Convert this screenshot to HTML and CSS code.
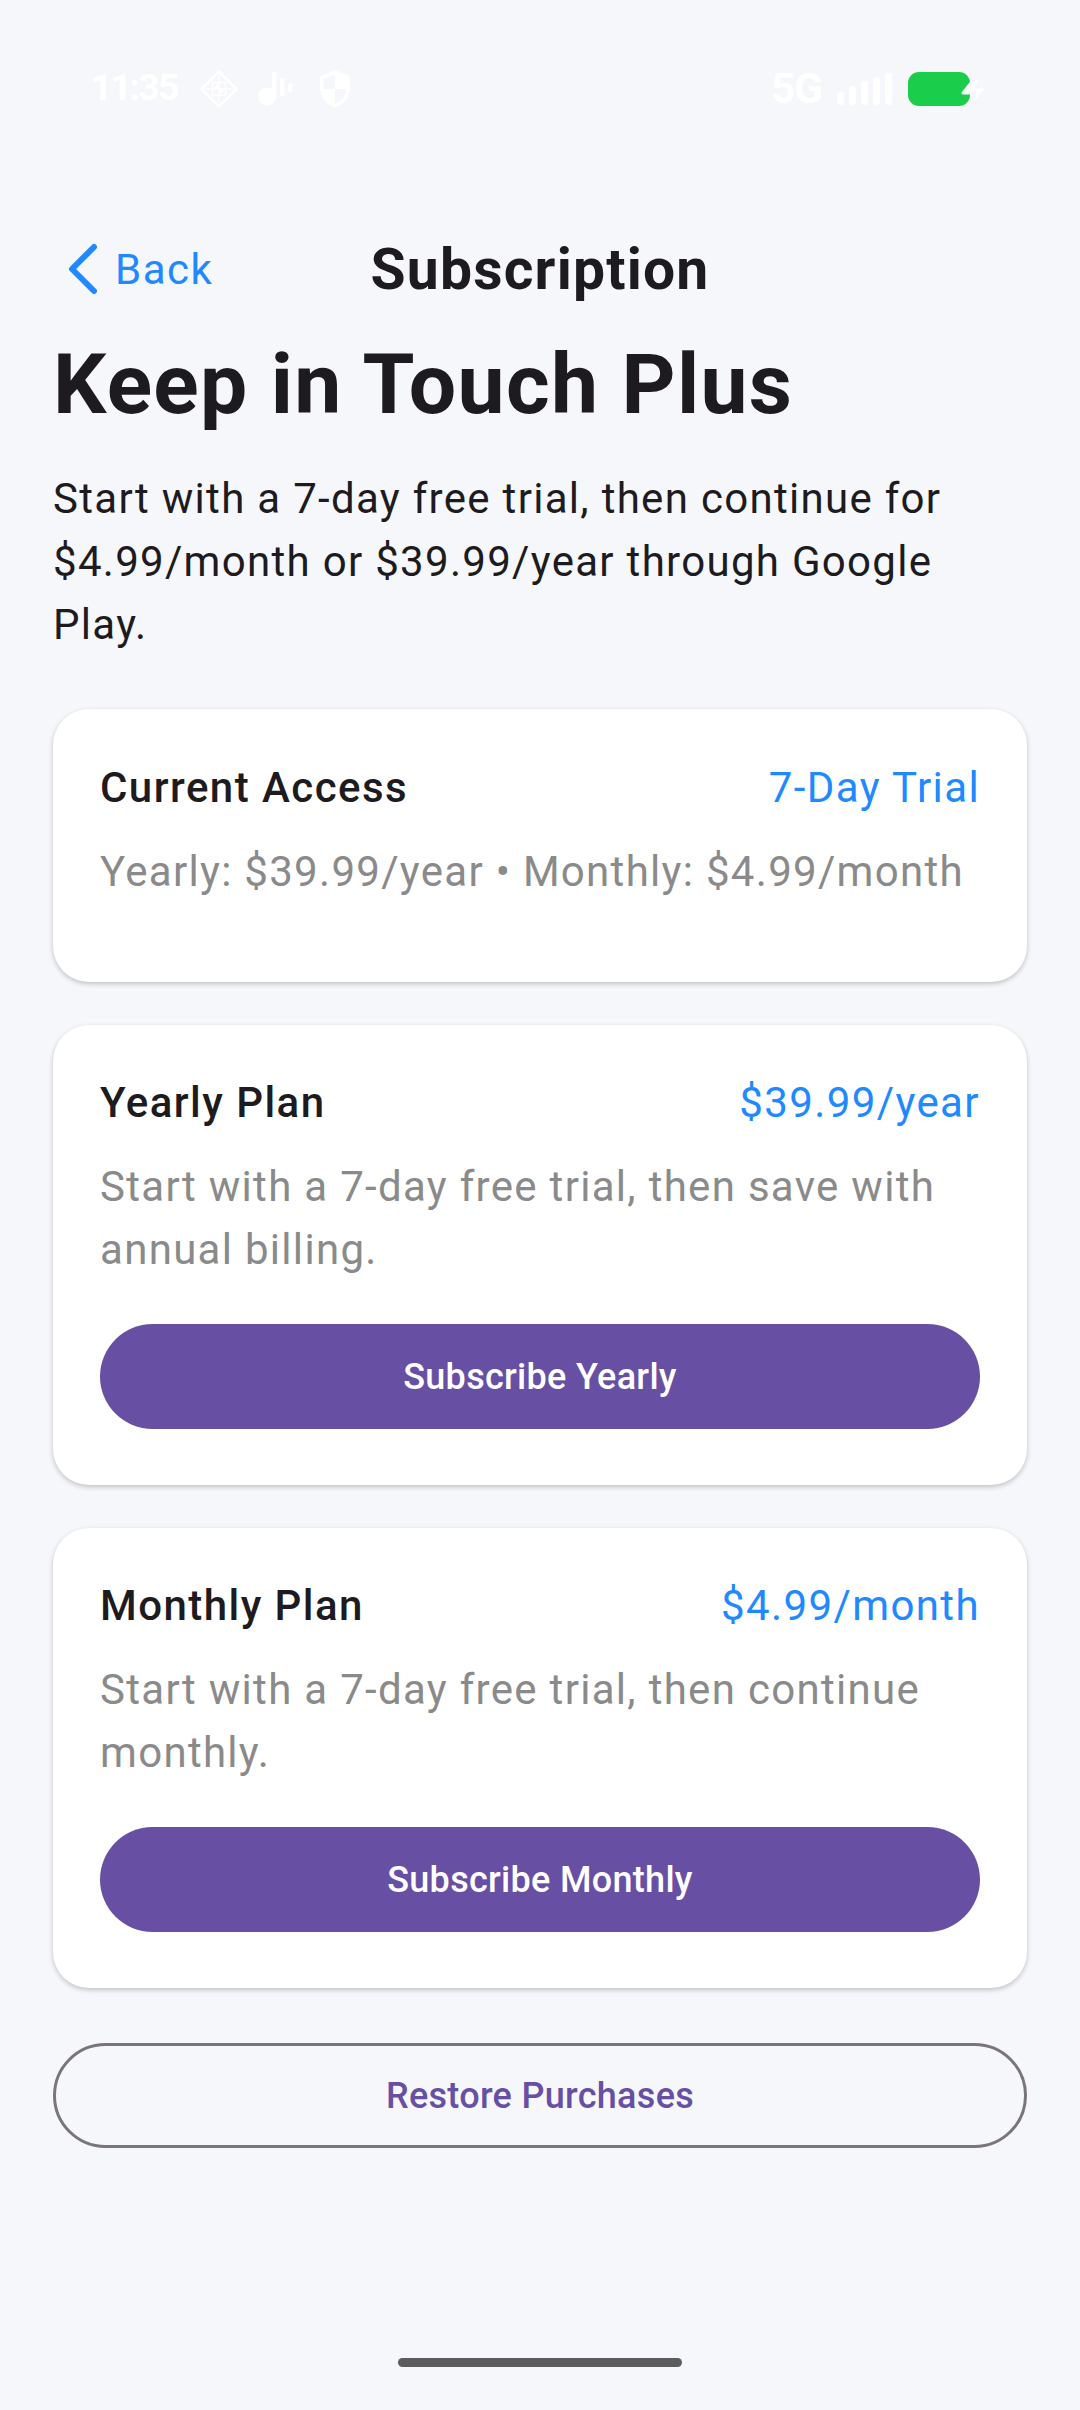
FILE: index.html
```html
<!DOCTYPE html>
<html>
	<head>
		<meta charset="UTF-8">
		<title>Subscription</title>
		<link rel="stylesheet" href="styles.css">
	</head>
	<body>
		<div class="status">
			<div class="status-left">
				<span class="time">11:35</span>
				<svg class="ic-diamond" width="38" height="38" viewBox="0 0 38 38" fill="none" stroke="#fff">
					<path d="M19 1.500L36.500 19L19 36.500L1.500 19Z" stroke-width="2.500" stroke-linejoin="round"/>
					<path d="M19 5V33M5 19H33M12.500 12.500V25.500H25.500V12.500H12.500" stroke-width="1.500"/>
					<path d="M12.500 19L19 12.500V19H12.500ZM19 19H25.500L19 25.500V19Z" fill="#fff" stroke="none"/>
				</svg>
				<svg class="ic-tiktok" width="35" height="34" viewBox="0 0 35 34" fill="#fff">
					<circle cx="9" cy="24.500" r="9"/>
					<rect x="14" y="0" width="4.500" height="26" rx="2.200"/>
					<rect x="22" y="6" width="4.500" height="18" rx="2.200"/>
					<rect x="30" y="11" width="4.500" height="9" rx="2.200"/>
				</svg>
				<svg class="ic-shield" width="30" height="38" viewBox="0 0 30 38" fill="#fff">
					<path fill-rule="evenodd" d="M15 0L30 6.500V18C30 27 23.500 35 15 37.500C6.500 35 0 27 0 18V6.500ZM15 4.500L3.500 9V19H15V33.500C21 31.500 25.500 26 26.500 19H15Z"/>
				</svg>
			</div>
			<div class="status-right">
				<span class="net">5G</span>
				<div class="signal">
					<i class="s1"></i><i class="s2"></i><i class="s3"></i><i class="s4"></i><i class="s5"></i>
				</div>
				<div class="battery">
					<div class="battery-fill"></div>
					<svg class="bolt" width="30" height="30" viewBox="0 0 30 30" fill="#fff" stroke="#f6f7fb" stroke-width="3" stroke-linejoin="round">
						<path d="M15 2H20L17 11H28L13 28L15 17H3Z"/>
					</svg>
				</div>
			</div>
		</div>

		<div class="page">
			<div class="nav">
				<div class="back">
					<svg width="32" height="52" viewBox="0 0 32 52" fill="none" stroke="#2189ff" stroke-width="6" stroke-linecap="round" stroke-linejoin="round">
						<path d="M27 4L5 26L27 48"/>
					</svg>
					<span>Back</span>
				</div>
				<div class="nav-title">Subscription</div>
			</div>
			<h1>Keep in Touch Plus</h1>
			<p class="intro">Start with a 7-day free trial, then continue for $4.99/month or $39.99/year through Google Play.</p>

			<div class="card card-access">
				<div class="card-head">
					<span class="card-name">Current Access</span>
					<span class="card-price">7-Day Trial</span>
				</div>
				<p class="card-text">Yearly: $39.99/year • Monthly: $4.99/month</p>
			</div>

			<div class="card">
				<div class="card-head">
					<span class="card-name">Yearly Plan</span>
					<span class="card-price">$39.99/year</span>
				</div>
				<p class="card-text">Start with a 7-day free trial, then save with annual billing.</p>
				<div class="btn">Subscribe Yearly</div>
			</div>

			<div class="card">
				<div class="card-head">
					<span class="card-name">Monthly Plan</span>
					<span class="card-price">$4.99/month</span>
				</div>
				<p class="card-text">Start with a 7-day free trial, then continue monthly.</p>
				<div class="btn">Subscribe Monthly</div>
			</div>

			<div class="restore">Restore Purchases</div>
		</div>

		<div class="home-bar"></div>
	</body>
</html>
```

FILE: styles.css
```css
*{
	margin: 0;
	padding: 0;
	box-sizing: border-box;
}
body{
	width: 1080px;
	height: 2410px;
	background: #f6f7fb;
	font-family: Roboto, "Liberation Sans", sans-serif;
	color: #1d1b20;
	position: relative;
	overflow: hidden;
}
.status{
	height: 228px;
	padding: 70px 0 0 91px;
	display: flex;
	justify-content: space-between;
	align-items: flex-start;
}
.status-left{
	display: flex;
	align-items: center;
	height: 38px;
}
.time{
	color: #fff;
	font-size: 37px;
	font-weight: 700;
	letter-spacing: -1.8px;
	width: 109px;
	margin-top: -3px;
}
.ic-tiktok{
	margin-left: 20px;
}
.ic-shield{
	margin-left: 27px;
}
.status-right{
	display: flex;
	align-items: center;
	height: 37px;
	padding-right: 110px;
}
.net{
	color: #fff;
	font-size: 42px;
	font-weight: 700;
	letter-spacing: -1px;
	margin-right: 15px;
}
.signal{
	display: flex;
	align-items: flex-end;
	gap: 5px;
	height: 32px;
	margin-right: 16px;
}
.signal i{
	display: block;
	width: 7px;
	background: #fff;
	border-radius: 4px;
}
.signal .s1{ height: 13px; }
.signal .s2{ height: 19px; }
.signal .s3{ height: 24px; }
.signal .s4{ height: 28px; }
.signal .s5{ height: 32px; }
.battery{
	display: flex;
	align-items: center;
	position: relative;
	width: 62px;
}
.battery-fill{
	width: 62px;
	height: 34px;
	background: #1ace4c;
	border-radius: 11px;
}
.bolt{
	position: absolute;
	left: 52px;
	top: 4px;
}
.page{
	padding: 0 53px;
}
.nav{
	height: 85px;
	display: flex;
	align-items: center;
	justify-content: center;
	position: relative;
}
.back{
	position: absolute;
	left: 14px;
	top: 15px;
	display: flex;
	align-items: center;
	gap: 16px;
	color: #2189ff;
	font-size: 42px;
	letter-spacing: 1.5px;
}
.nav-title{
	font-size: 57px;
	font-weight: 700;
	letter-spacing: 1.2px;
	margin-top: -2px;
}
h1{
	font-size: 84px;
	font-weight: 700;
	line-height: 100px;
	letter-spacing: 1.3px;
	margin-top: 22px;
}
.intro{
	font-size: 42px;
	line-height: 63px;
	letter-spacing: 1.3px;
	margin-top: 32px;
}
.card{
	background: #fff;
	border-radius: 36px;
	padding: 46px 47px 56px;
	margin-top: 43px;
	box-shadow: 0 2px 5px rgba(0,0,0,0.22);
}
.card-access{
	height: 273px;
	margin-top: 53px;
	padding-top: 47px;
}
.card-head{
	display: flex;
	justify-content: space-between;
	align-items: center;
	height: 63px;
}
.card-name{
	font-size: 42px;
	font-weight: 500;
	letter-spacing: 1.45px;
}
.card-price{
	font-size: 42px;
	color: #2189ff;
	letter-spacing: 1.4px;
}
.card-text{
	font-size: 42px;
	line-height: 63px;
	letter-spacing: 1.3px;
	color: #8a8a8a;
	margin-top: 21px;
}
.btn{
	height: 105px;
	margin-top: 43px;
	background: #6750a4;
	color: #fff;
	border-radius: 53px;
	font-size: 36px;
	font-weight: 500;
	letter-spacing: 0.3px;
	display: flex;
	align-items: center;
	justify-content: center;
}
.restore{
	height: 105px;
	margin-top: 55px;
	border: 3px solid #79747e;
	border-radius: 53px;
	color: #6750a4;
	font-size: 36px;
	font-weight: 500;
	letter-spacing: 0.3px;
	display: flex;
	align-items: center;
	justify-content: center;
}
.home-bar{
	position: absolute;
	left: 398px;
	top: 2358px;
	width: 284px;
	height: 9px;
	border-radius: 5px;
	background: #5c5c5c;
}
```
